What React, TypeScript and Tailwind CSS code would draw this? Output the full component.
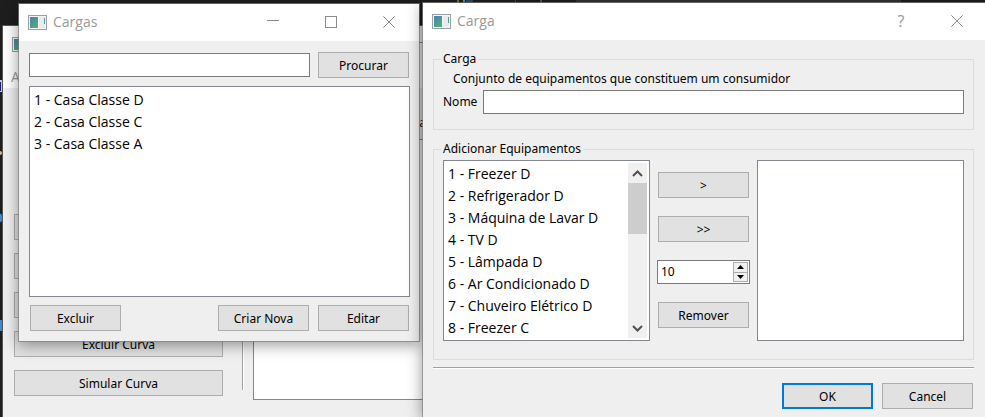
import React from "react";

const LOADS = ["1 - Casa Classe D", "2 - Casa Classe C", "3 - Casa Classe A"];
const EQUIPMENT = [
  "1 - Freezer D",
  "2 - Refrigerador D",
  "3 - Máquina de Lavar D",
  "4 - TV D",
  "5 - Lâmpada D",
  "6 - Ar Condicionado D",
  "7 - Chuveiro Elétrico D",
  "8 - Freezer C",
];

function AppIcon() {
  return (
    <svg width="19" height="15" viewBox="0 0 19 15" className="shrink-0">
      <defs>
        <linearGradient id="pane" x1="0" y1="0" x2="0.6" y2="1">
          <stop offset="0" stopColor="#4a7fae" />
          <stop offset="1" stopColor="#4fae7c" />
        </linearGradient>
      </defs>
      <rect x="0.5" y="0.5" width="18" height="14" fill="#f4f6f7" stroke="#9aa0a5" />
      <rect x="2" y="2" width="8" height="11" fill="url(#pane)" />
      <rect x="11" y="2" width="6" height="11" fill="#e9eceb" />
      <rect x="16" y="3" width="1" height="6" fill="#4f9f8a" />
    </svg>
  );
}

function Glyph({ kind }: { kind: "min" | "max" | "close" }) {
  return (
    <svg width="12" height="12" viewBox="0 0 12 12" fill="none" stroke="#8c8c8c">
      {kind === "min" && <path d="M0 4.5H12" />}
      {kind === "max" && <rect x="0.5" y="0.5" width="11" height="11" />}
      {kind === "close" && <path d="M0.3 0.3L11.7 11.7M11.7 0.3L0.3 11.7" />}
    </svg>
  );
}

function TitleBar({ title, children }: { title?: string; children?: React.ReactNode }) {
  return (
    <header className="flex h-[37px] items-center bg-white pb-px pl-[9px] text-[#999]">
      <AppIcon />
      <h1 className="ml-1.5 flex-1 font-['Open_Sans','Noto_Sans',sans-serif] text-[14px] leading-5">{title}</h1>
      {children}
    </header>
  );
}

function Button({
  children,
  className = "w-[91px]",
  primary = false,
}: {
  children?: React.ReactNode;
  className?: string;
  primary?: boolean;
}) {
  return (
    <button
      type="button"
      className={`flex h-[26px] shrink-0 items-center justify-center bg-[#e1e1e1] pt-0.5 leading-4 ${
        primary ? "border-2 border-[#0078d7]" : "border border-[#adadad]"
      } ${className}`}
    >
      {children}
    </button>
  );
}

function Items({ items }: { items: string[] }) {
  return (
    <ul className="flex-1 overflow-hidden pl-0.5 font-['Open_Sans','Noto_Sans',sans-serif] text-[14px] leading-[22px]">
      {items.map((item) => (
        <li key={item} className="whitespace-nowrap">
          {item}
        </li>
      ))}
    </ul>
  );
}

function ScrollBar() {
  return (
    <div className="flex w-[19px] flex-col items-center bg-[#f0f0f0]">
      <button type="button" aria-label="▲" className="flex h-5 w-full items-center justify-center">
        <svg width="11" height="7" viewBox="0 0 11 7" fill="none" stroke="#505050" strokeWidth="2">
          <path d="M1 6L5.5 1.5L10 6" />
        </svg>
      </button>
      <div className="h-[51px] w-full bg-[#cdcdcd]" />
      <button type="button" aria-label="▼" className="mt-auto flex h-5 w-full items-center justify-center">
        <svg width="11" height="7" viewBox="0 0 11 7" fill="none" stroke="#505050" strokeWidth="2">
          <path d="M1 1L5.5 5.5L10 1" />
        </svg>
      </button>
    </div>
  );
}

function Desktop() {
  return (
    <svg className="absolute inset-0 h-full w-full">
      <rect x="576" y="0" width="325" height="3" fill="#333" />
      <rect x="457" y="0" width="2" height="3" fill="#5a8a1a" />
      <rect x="463" y="0" width="2" height="2" fill="#5b9bc4" />
      <rect x="466" y="0" width="7" height="2" fill="#2f4a60" />
      <rect x="515" y="0" width="1" height="3" fill="#444" />
      <rect x="540" y="0" width="2" height="3" fill="#555" />
      <rect x="0" y="80" width="3" height="12" fill="#c9c9d4" />
      <rect x="0" y="82" width="1" height="9" fill="#1c1c78" />
      <circle cx="0" cy="153" r="2" fill="#d8b48c" />
      <circle cx="-2" cy="218" r="5" fill="#3f8ac6" />
      <rect x="0" y="320" width="3" height="11" fill="#3f8ac6" />
    </svg>
  );
}

function CurvesWindow() {
  return (
    <section className="absolute top-[25px] bottom-0 left-[2px] w-[460px] border-t border-l border-[#555] bg-[#efefef]">
      <TitleBar>
        <button type="button" aria-label="−" className="mr-[34px] flex w-3 justify-center">
          <Glyph kind="min" />
        </button>
      </TitleBar>
      <nav className="h-[25px] bg-white pl-2 font-['Open_Sans',sans-serif] text-[14px] leading-7 text-[#999]">A</nav>
      <div className="flex pl-[11px]">
        <div className="flex w-[209px] flex-col gap-[13px] pt-[126px]">
          <Button className="w-full" />
          <Button className="w-full" />
          <Button className="w-full" />
          <Button className="w-full">Excluir Curva</Button>
          <Button className="w-full">Simular Curva</Button>
        </div>
        <div className="ml-[19px] h-[302px] w-0.5 border-r border-l border-r-white border-l-[#a0a0a0]" />
        <div className="ml-[9px] flex-1">
          <p className="flex h-[51px] items-end justify-end pr-9 pb-2 leading-4">ca</p>
          <div className="h-[261px] border border-[#828790] bg-white" />
        </div>
      </div>
    </section>
  );
}

function LoadsWindow() {
  return (
    <section className="absolute top-[3px] left-[18px] w-[402px] border border-[#808080]/70 bg-[#efefef] bg-clip-padding shadow-[0_3px_14px_rgba(0,0,0,0.4)]">
      <TitleBar title="Cargas">
        <div className="mr-px flex">
          {(["min", "max", "close"] as const).map((kind) => (
            <button key={kind} type="button" aria-label={kind} className="flex w-[58px] justify-center">
              <Glyph kind={kind} />
            </button>
          ))}
        </div>
      </TitleBar>
      <div className="flex flex-col gap-2 pt-[11px] pr-[9px] pb-[10px] pl-[10px]">
        <form className="flex items-center gap-2 pr-px">
          <input aria-label="Procurar" className="h-6 min-w-0 flex-1 border border-[#7a7a7a] bg-white px-1" />
          <Button>Procurar</Button>
        </form>
        <div className="flex h-[211px] border border-[#828790] bg-white p-0.5">
          <Items items={LOADS} />
        </div>
        <div className="flex gap-[9px] px-px">
          <Button>Excluir</Button>
          <div className="flex-1" />
          <Button>Criar Nova</Button>
          <Button>Editar</Button>
        </div>
      </div>
    </section>
  );
}

function LoadDialog() {
  return (
    <section className="absolute top-[2px] right-0 bottom-0 left-[422px] border-t border-l border-[#808080]/70 bg-[#efefef] bg-clip-padding shadow-[0_3px_14px_rgba(0,0,0,0.4)]">
      <TitleBar title="Carga">
        <button type="button" className="w-14 font-['Open_Sans',sans-serif] text-[16px] leading-5">
          ?
        </button>
        <button type="button" aria-label="close" className="flex w-14 justify-center">
          <Glyph kind="close" />
        </button>
      </TitleBar>
      <form className="pt-[11px] pr-[11px] pl-[10px]">
        <fieldset className="border border-[#dcdcdc] px-[9px] pb-[15px]">
          <legend className="-ml-0.5 px-0.5 leading-4">Carga</legend>
          <p className="pt-1 pl-[10px] leading-4">Conjunto de equipamentos que constituem um consumidor</p>
          <div className="mt-[3px] flex items-center">
            <label htmlFor="nome" className="w-10 leading-4">
              Nome
            </label>
            <input id="nome" className="h-6 min-w-0 flex-1 border border-[#7a7a7a] bg-white px-1" />
          </div>
        </fieldset>
        <fieldset className="mt-[11px] border border-[#dcdcdc] px-[9px] pb-[18px]">
          <legend className="-ml-0.5 px-0.5 leading-4">Adicionar Equipamentos</legend>
          <div className="grid grid-cols-[minmax(0,1fr)_93px_minmax(0,1fr)] gap-[7px] pt-[3px]">
            <div className="flex h-[181px] border border-[#828790] bg-white p-0.5">
              <Items items={EQUIPMENT} />
              <ScrollBar />
            </div>
            <div className="flex flex-col items-center gap-[18px] pt-3">
              <Button>&gt;</Button>
              <Button>&gt;&gt;</Button>
              <div className="flex h-6 w-full border border-[#7a7a7a] bg-white p-px">
                <input
                  type="number"
                  aria-label="10"
                  defaultValue={10}
                  className="w-full min-w-0 flex-1 [appearance:textfield] pl-0.5 leading-4 [&::-webkit-inner-spin-button]:appearance-none"
                />
                <div className="flex w-[15px] flex-col border border-[#adadad] bg-[#f0f0f0]">
                  <button type="button" aria-label="+" className="flex flex-1 items-center justify-center border-b border-[#adadad]">
                    <svg width="7" height="4" viewBox="0 0 7 4">
                      <path d="M0 4L3.5 0L7 4Z" />
                    </svg>
                  </button>
                  <button type="button" aria-label="-" className="flex flex-1 items-center justify-center">
                    <svg width="7" height="4" viewBox="0 0 7 4">
                      <path d="M0 0L3.5 4L7 0Z" />
                    </svg>
                  </button>
                </div>
              </div>
              <Button>Remover</Button>
            </div>
            <div className="h-[181px] border border-[#828790] bg-white" />
          </div>
        </fieldset>
        <hr className="mt-[7px] h-0.5 border-t border-b border-t-[#a0a0a0] border-b-white" />
        <div className="mt-[14px] flex justify-end gap-[9px] pr-px">
          <Button primary>OK</Button>
          <Button>Cancel</Button>
        </div>
      </form>
    </section>
  );
}

export default function App() {
  return (
    <main className="relative h-screen w-full overflow-hidden bg-[#1e1e1e] font-['Noto_Sans',sans-serif] text-[12px] text-black">
      <Desktop />
      <CurvesWindow />
      <LoadsWindow />
      <LoadDialog />
    </main>
  );
}
